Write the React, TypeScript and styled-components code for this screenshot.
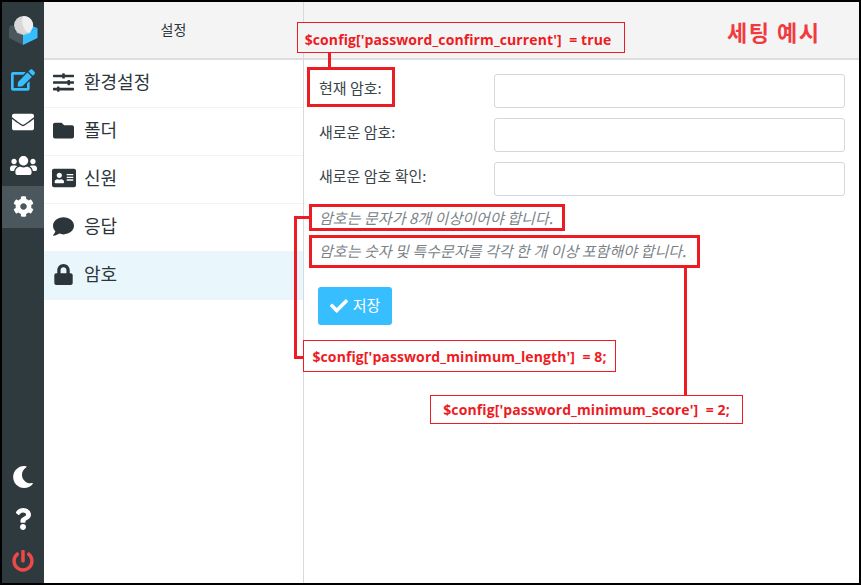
import React from "react";
import styled, { createGlobalStyle } from "styled-components";
import { FaSlidersH, FaFolder, FaAddressCard, FaComment, FaLock, FaEdit, FaEnvelope, FaUsers, FaCog, FaMoon, FaQuestion, FaPowerOff, FaCheck } from "react-icons/fa";

const Global = createGlobalStyle`
  html, body { margin: 0; padding: 0; background: #000; }
  * { box-sizing: border-box; }
`;
const KR = `"Noto Sans CJK KR", "Noto Sans", sans-serif`;
const Frame = styled.div`
  position: relative; width: 861px; height: 585px; border: 2px solid #000; background: #fff;
  display: flex; overflow: hidden; font-family: ${KR}; color: #2c363a;
`;
const Rail = styled.nav`
  width: 42px; background: #2f3a3f; display: flex; flex-direction: column; flex: none;
`;
const Logo = styled.div`height: 58px; display: flex; align-items: center; justify-content: center; padding-bottom: 2px;`;
const RailBtn = styled.div<{ $active?: boolean; $color?: string; $size?: number; $up?: number }>`
  height: 42px; display: flex; align-items: center; justify-content: center;
  padding-bottom: ${p => p.$up || 0}px;
  background: ${p => (p.$active ? "#4a575d" : "transparent")};
  color: ${p => p.$color || "#fff"}; font-size: ${p => p.$size || 22}px;
`;
const Spacer = styled.div`flex: 1;`;
const RailFoot = styled.div`display: flex; flex-direction: column; padding-bottom: 1px;`;
const ListCol = styled.aside`width: 260px; flex: none; border-right: 1px solid #d4dbde; display: flex; flex-direction: column;`;
const Head = styled.header`
  height: 58px; flex: none; background: #f4f4f4; border-bottom: 2px solid #dcdfe0;
  display: flex; align-items: center; justify-content: center; font-size: 14px; padding-bottom: 3px;
`;
const Row = styled.div<{ $active?: boolean }>`
  height: 48px; display: flex; align-items: center; padding: 0 0 5px 7px; gap: 8px; font-size: 18px;
  border-bottom: 1px solid ${p => (p.$active ? "transparent" : "#f1f3f4")};
  background: ${p => (p.$active ? "#e9f6fc" : "#fff")};
`;
const RowIcon = styled.span<{ $size?: number }>`
  width: 25px; margin-top: 2px; display: flex; justify-content: center;
  font-size: ${p => p.$size || 21}px; color: #2c363a;
`;
const Main = styled.main`flex: 1; display: flex; flex-direction: column;`;
const Form = styled.div`padding: 9px 13px 0 14px; display: flex; flex-direction: column;`;
const Field = styled.div`display: flex; align-items: center; height: 44px;`;
const Label = styled.label`width: 176px; font-size: 15px; color: #3a4449; padding: 0 0 8px 1px;`;
const Input = styled.div`width: 351px; height: 34px; background: #fff; border: 1px solid #d2d8de; border-radius: 3px;`;
const Hint = styled.p`margin: 0; font-size: 15px; font-style: italic; color: #7b8388; height: 33px; line-height: 34px; padding-left: 1px; letter-spacing: 0.05px;`;
const Hints = styled.div`margin-bottom: 20px;`;
const Save = styled.button`
  width: 74px; height: 38px; border: 0; border-radius: 3px; background: #37beff; color: #fff;
  display: flex; align-items: center; justify-content: center; gap: 5px; font: 15px ${KR}; padding: 0 0 3px;
  svg { font-size: 18px; margin-top: 3px; }
`;
const Note = styled.div<{ $x: number; $y: number; $w: number; $h: number }>`
  position: absolute; left: ${p => p.$x}px; top: ${p => p.$y}px; width: ${p => p.$w}px; height: ${p => p.$h}px;
  border: 1px solid #ed1c24; color: #ed1c24; font: bold 14px "Open Sans", sans-serif;
  display: flex; align-items: center; justify-content: center; white-space: pre; letter-spacing: 0.1px; z-index: 2;
`;
const NoteW = styled(Note)`background: #fff;`;
const NoteG = styled(Note)`background: #f4f4f4; padding: 3px 6px 0 0;`;
const Box = styled.div<{ $x: number; $y: number; $w: number; $h: number }>`
  position: absolute; left: ${p => p.$x}px; top: ${p => p.$y}px; width: ${p => p.$w}px; height: ${p => p.$h}px;
  border: 3px solid #ed1c24; z-index: 2;
`;
const Wire = styled.div<{ $x: number; $y: number; $w: number; $h: number }>`
  position: absolute; left: ${p => p.$x}px; top: ${p => p.$y}px; width: ${p => p.$w}px; height: ${p => p.$h}px;
  background: #ed1c24; z-index: 1;
`;
const Title = styled.div`
  position: absolute; left: 725px; top: 15px; font: bold 22px ${KR}; color: #f03a40; letter-spacing: 1.5px; line-height: 28px; z-index: 2;
`;

const RCLogo = () => (
  <svg width="29" height="29" viewBox="0 0 29 29">
    <path d="M0 12 L14 19 L14 29 L0 22 Z" fill="#4a575d" />
    <path d="M14 19 L28.5 12 L28.5 22 L14 29 Z" fill="#37beff" />
    <circle cx="14.5" cy="9.5" r="9.5" fill="#d8d8d8" />
    <path d="M14.5 0 A9.5 9.5 0 0 1 20 17.3 C 15 15 11 6 14.5 0Z" fill="#efefef" />
    <path d="M5 10.5 C6 15 9 17.5 14 19 L0 12 L2 9Z" fill="#4a575d" />
    <path d="M24 10.5 L28.5 12 L14 19 C19 17.5 23 15 24 10.5Z" fill="#37beff" />
  </svg>
);

const rows: [React.ReactNode, string, number?][] = [
  [<FaSlidersH />, "환경설정"],
  [<FaFolder />, "폴더"],
  [<FaAddressCard />, "신원", 24],
  [<FaComment />, "응답"],
  [<FaLock />, "암호"],
];

export default function App() {
  return (
    <>
      <Global />
      <Frame>
        <Rail>
          <Logo><RCLogo /></Logo>
          <RailBtn $color="#37beff" $size={24} $up={2}><FaEdit /></RailBtn>
          <RailBtn $up={3}><FaEnvelope /></RailBtn>
          <RailBtn $size={27}><FaUsers /></RailBtn>
          <RailBtn $active $size={21} $up={2}><FaCog /></RailBtn>
          <Spacer />
          <RailFoot>
            <RailBtn><FaMoon /></RailBtn>
            <RailBtn><FaQuestion /></RailBtn>
            <RailBtn $color="#f04848"><FaPowerOff /></RailBtn>
          </RailFoot>
        </Rail>
        <ListCol>
          <Head>설정</Head>
          {rows.map(([icon, text, size], i) => (
            <Row key={text} $active={i === 4}>
              <RowIcon $size={size}>{icon}</RowIcon>
              {text}
            </Row>
          ))}
        </ListCol>
        <Main>
          <Head />
          <Form>
            <Field><Label>현재 암호:</Label><Input /></Field>
            <Field><Label>새로운 암호:</Label><Input /></Field>
            <Field><Label>새로운 암호 확인:</Label><Input /></Field>
            <Hints>
              <Hint>암호는 문자가 8개 이상이어야 합니다.</Hint>
              <Hint>암호는 숫자 및 특수문자를 각각 한 개 이상 포함해야 합니다.</Hint>
            </Hints>
            <Save><FaCheck />저장</Save>
          </Form>
        </Main>
        <Title>세팅 예시</Title>
        <NoteG $x={295} $y={20} $w={328} $h={31}>{"$config['password_confirm_current']  = true"}</NoteG>
        <Wire $x={326} $y={51} $w={3} $h={16} />
        <Box $x={305} $y={65} $w={88} $h={40} />
        <Box $x={307} $y={202} $w={256} $h={27} />
        <Box $x={307} $y={233} $w={391} $h={33} />
        <Wire $x={292} $y={214} $w={15} $h={3} />
        <Wire $x={292} $y={214} $w={3} $h={143} />
        <Wire $x={292} $y={354} $w={10} $h={3} />
        <NoteW $x={301} $y={338} $w={313} $h={32}>{"$config['password_minimum_length']  = 8;"}</NoteW>
        <Wire $x={682} $y={266} $w={3} $h={128} />
        <NoteW $x={428} $y={393} $w={313} $h={29}>{"$config['password_minimum_score']  = 2;"}</NoteW>
      </Frame>
    </>
  );
}
